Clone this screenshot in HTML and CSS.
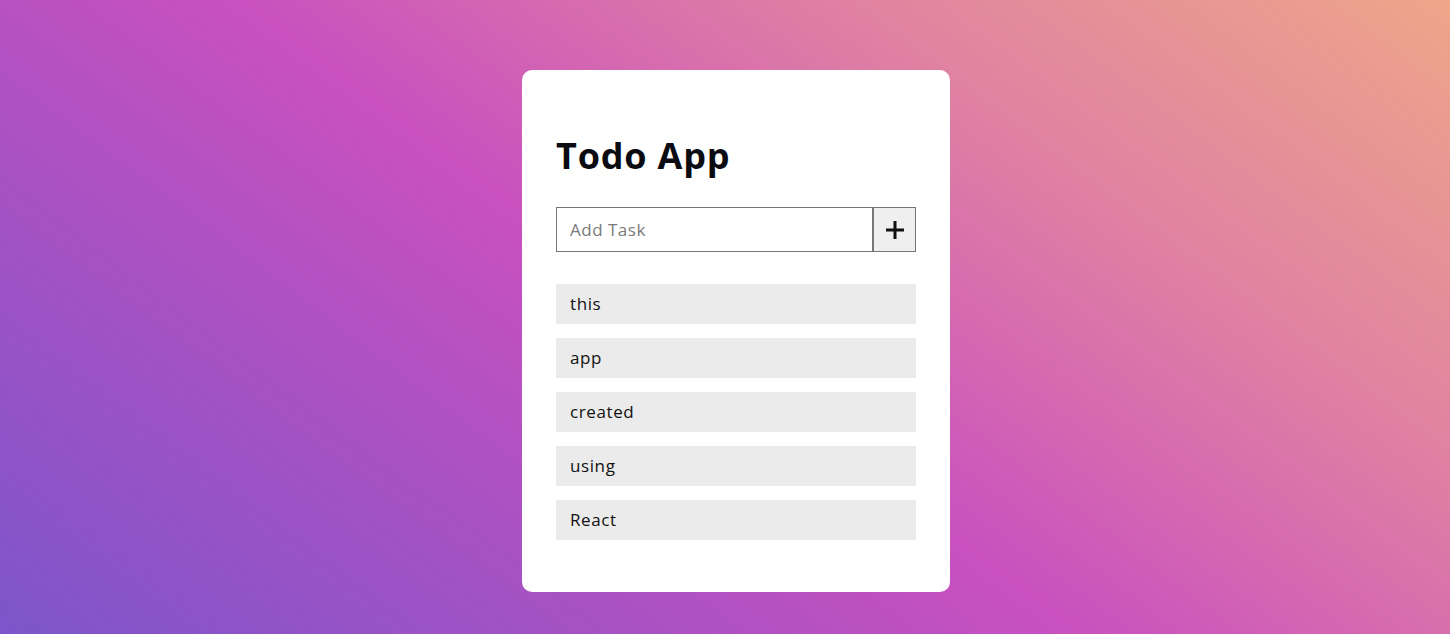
FILE: index.html
```html
<!DOCTYPE html>
<html lang="en">
<head>
    <meta charset="UTF-8">
    <meta name="viewport" content="width=device-width, initial-scale=1.0">
    <title>Todo App</title>
    <link rel="stylesheet" href="styles.css">
</head>
<body>
    <!-- Todo Card -->
    <div class="todo-card">
        <h1>Todo App</h1>

        <form class="todo-form">
            <input type="text" class="todo-input" placeholder="Add Task">
            <button type="button" class="add-btn" aria-label="Add">
                <svg width="18" height="18" viewBox="0 0 18 18">
                    <path d="M9 0v18M0 9h18" stroke="#111" stroke-width="3"/>
                </svg>
            </button>
        </form>

        <ul class="todo-list">
            <li class="todo-item">this</li>
            <li class="todo-item">app</li>
            <li class="todo-item">created</li>
            <li class="todo-item">using</li>
            <li class="todo-item">React</li>
        </ul>
    </div>
</body>
</html>
```

FILE: styles.css
```css
/* Global Styles */
body {
    font-family: 'Open Sans', 'Liberation Sans', sans-serif;
    margin: 0;
    padding: 70px 0 0 22px;
    min-height: 100vh;
    box-sizing: border-box;
    display: flex;
    justify-content: center;
    align-items: flex-start;
    background: linear-gradient(37deg, #7d55ca 0%, #a252c4 24%, #c950bf 47%, #df7fa3 72%, #eea689 100%);
}

/* Card */
.todo-card {
    background-color: white;
    width: 428px;
    box-sizing: border-box;
    padding: 34px 34px 52px;
    border-radius: 10px;
}

h1 {
    font-size: 36px;
    font-weight: 700;
    line-height: 44px;
    letter-spacing: 0.8px;
    margin: 30px 0 29px;
    color: #0b0b12;
}

/* Input Row */
.todo-form {
    display: flex;
    margin-bottom: 32px;
}

.todo-input {
    flex: 1;
    height: 45px;
    box-sizing: border-box;
    border: 1px solid #767676;
    padding: 0 13px;
    font-family: inherit;
    font-size: 17px;
    letter-spacing: 0.5px;
    outline: none;
}

.todo-input::placeholder {
    color: #7a7a7a;
}

.add-btn {
    width: 43px;
    height: 45px;
    box-sizing: border-box;
    background-color: #efefef;
    border: 1px solid #767676;
    padding: 0;
    display: flex;
    align-items: center;
    justify-content: center;
    cursor: pointer;
}

/* Task List */
.todo-list {
    list-style: none;
    margin: 0;
    padding: 0;
    display: flex;
    flex-direction: column;
    gap: 14px;
}

.todo-item {
    background-color: #ebebeb;
    height: 40px;
    line-height: 40px;
    padding: 0 14px;
    font-size: 17px;
    letter-spacing: 0.6px;
    color: #111;
}
```
